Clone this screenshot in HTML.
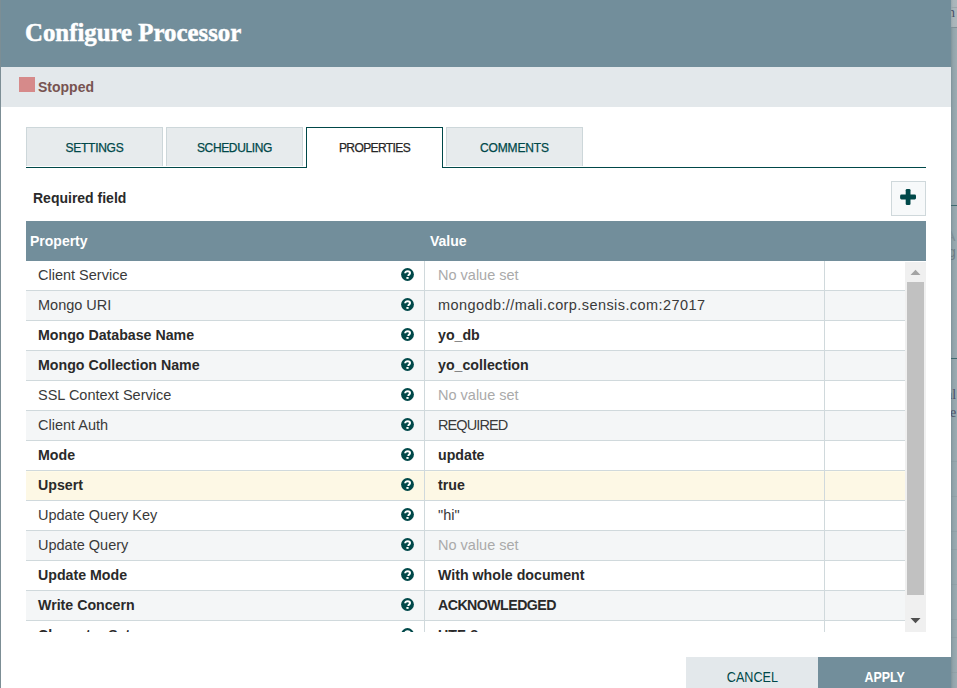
<!DOCTYPE html>
<html><head><meta charset="utf-8">
<style>
*{margin:0;padding:0;box-sizing:border-box}
html,body{width:957px;height:688px;overflow:hidden;background:#9aa9af;font-family:"Liberation Sans",sans-serif}
.abs{position:absolute}
#leftline{left:0;top:0;width:1px;height:688px;background:#7c8e95}
#dlg{left:1px;top:0;width:950px;height:688px;background:#fff;overflow:hidden}
#hdr{left:0;top:0;width:950px;height:67px;background:#728e9b}
#title{left:24px;top:18px;font-family:"Liberation Serif",serif;font-weight:bold;font-size:26px;letter-spacing:0px;transform:scaleX(0.955);transform-origin:0 0;-webkit-text-stroke:0.5px #fff;color:#fff;line-height:30px;white-space:nowrap}
#status{left:0;top:67px;width:950px;height:40px;background:#e3e8eb}
#sq{left:18px;top:10px;width:16px;height:15px;background:#d68a8a}
#stxt{left:37px;top:11px;font-weight:bold;font-size:14px;color:#775351;line-height:18px}
.tab{top:127px;width:137px;height:39px;background:#e7ebed;border:1px solid #cdd7da;border-bottom:none;color:#004849;font-size:12px;letter-spacing:-0.45px;text-align:center;line-height:40px;text-transform:uppercase;-webkit-text-stroke:0.25px currentColor}
.tab.act{background:#fff;border:1px solid #004849;border-bottom:none;color:#262626;height:41px;z-index:2;line-height:40px}
#tabline{left:25px;top:167px;width:900px;height:1px;background:#004849;z-index:1}
#req{left:32px;top:189px;font-weight:bold;font-size:14px;color:#2a2a2a;line-height:18px}
#add{left:890px;top:181px;width:35px;height:35px;background:#f7f9fa;border:1px solid #cfd8db}
#thead{left:25px;top:221px;width:900px;height:40px;background:#728e9b;color:#fff;font-weight:bold;font-size:14px}
#grid{left:25px;top:261px;width:900px;height:371px;overflow:hidden}
.row{position:absolute;left:0;width:879px;height:30px;border-bottom:1px solid #d0d9dc;font-size:14.5px;color:#3a3a3a}
.row.even{background:#f4f6f7}
.row.hl{background:#fdf8e5;box-shadow:inset 0 1px 0 #fffbe9}
.row b{font-weight:bold;font-size:14.2px;color:#2a2a2a}
.c1{position:absolute;left:12px;top:4.5px;line-height:18px;white-space:nowrap}
.c2{position:absolute;left:412px;top:4.5px;line-height:18px;white-space:nowrap}
.d1{position:absolute;left:398px;top:-1px;width:1px;height:31px;background:#d0d9dc}
.d2{position:absolute;left:798px;top:-1px;width:1px;height:31px;background:#d0d9dc}
.unset{color:#aaaaaa}
.help{position:absolute;left:375.2px;top:7px;width:13px;height:13px}
#sb{left:879px;top:1px;width:21px;height:370px;background:#f0f0f0}
#thumb{left:2px;top:20px;width:17px;height:313px;background:#c1c1c1}
#cancel{left:685px;top:657px;width:132px;height:40px;background:#e3e8eb;color:#004849;font-size:14px;text-align:center;line-height:40px}
#apply{left:817px;top:657px;width:133px;height:40px;background:#728e9b;color:#fff;font-weight:bold;font-size:14px;text-align:center;line-height:40px}
</style></head><body>
<div id="leftline" class="abs"></div>
<div class="abs" style="left:951px;top:0;width:6px;height:688px;background:linear-gradient(90deg,#7f939a 0,#91a3aa 2px,#9cacb2 6px)"></div>
<div class="abs" style="left:951px;top:0;width:6px;height:27px;background:linear-gradient(90deg,#98a6ac 0,#a9b4b9 2px,#acb7bc 6px)"></div>
<div class="abs" style="left:951px;top:444px;width:6px;height:244px;background:repeating-linear-gradient(180deg,rgba(120,135,142,0) 0,rgba(120,135,142,0) 17px,rgba(120,135,142,.22) 17px,rgba(120,135,142,.22) 17.6px)"></div>
<div class="abs" style="left:951px;top:7px;width:6px;height:1px;background:#9aa6ab"></div>
<div class="abs" style="left:951px;top:27px;width:6px;height:1px;background:#7f8f96"></div>
<div class="abs" style="left:951px;top:205px;width:6px;height:1px;background:#3f6a6f"></div>
<div class="abs" style="left:951px;top:358px;width:6px;height:1px;background:#3f6a6f"></div>
<div class="abs" style="left:948px;top:4px;font-family:'Liberation Serif',serif;font-size:14px;line-height:18px;color:#4b5068">n</div>
<div class="abs" style="left:946px;top:227px;font-size:14px;line-height:18px;color:#7d8c93">A</div>
<div class="abs" style="left:948px;top:243px;font-size:14px;line-height:18px;color:#6d7c83">g</div>
<div class="abs" style="left:946px;top:386px;font-family:'Liberation Serif',serif;font-size:14px;line-height:18px;color:#4b5068">al</div>
<div class="abs" style="left:946px;top:404px;font-family:'Liberation Serif',serif;font-size:14px;line-height:18px;color:#4b5068">le</div>
<div id="dlg" class="abs">
  <div id="hdr" class="abs"><div id="title" class="abs">Configure Processor</div></div>
  <div id="status" class="abs"><div id="sq" class="abs"></div><div id="stxt" class="abs">Stopped</div></div>
  <div class="tab abs" style="left:25px;letter-spacing:-0.28px">Settings</div>
  <div class="tab abs" style="left:165px;letter-spacing:-0.35px">Scheduling</div>
  <div class="tab abs act" style="left:305px;letter-spacing:-0.6px">Properties</div>
  <div class="tab abs" style="left:445px;letter-spacing:-0.14px">Comments</div>
  <div id="tabline" class="abs"></div>
  <div id="req" class="abs">Required field</div>
  <div id="add" class="abs"><svg width="35" height="35" viewBox="0 0 35 35" style="position:absolute;left:-1px;top:-1px"><rect x="9.1" y="13.6" width="15.9" height="4.8" rx="1.3" fill="#004849"/><rect x="14.7" y="8" width="4.8" height="16" rx="1.3" fill="#004849"/></svg></div>
  <div id="thead" class="abs"><span class="abs" style="left:4px;top:11px;line-height:18px">Property</span><span class="abs" style="left:404px;top:11px;line-height:18px">Value</span></div>
  <div id="grid" class="abs">
    <div class="row " style="top:0px"><div class="c1">Client Service</div><svg class="help" viewBox="0 0 13 13"><circle cx="6.5" cy="6.5" r="6.4" fill="#004849"/><path d="M4.2 5.3C4.2 3.9 5.2 3.3 6.6 3.3C8 3.3 9 4 9 5.1C9 6.5 7.3 6.5 7.3 7.9" stroke="#fff" stroke-width="2" fill="none"/><rect x="5.4" y="9" width="2.2" height="1.9" fill="#fff"/></svg><div class="d1"></div><div class="c2 unset">No value set</div><div class="d2"></div></div>
    <div class="row even" style="top:30px"><div class="c1">Mongo URI</div><svg class="help" viewBox="0 0 13 13"><circle cx="6.5" cy="6.5" r="6.4" fill="#004849"/><path d="M4.2 5.3C4.2 3.9 5.2 3.3 6.6 3.3C8 3.3 9 4 9 5.1C9 6.5 7.3 6.5 7.3 7.9" stroke="#fff" stroke-width="2" fill="none"/><rect x="5.4" y="9" width="2.2" height="1.9" fill="#fff"/></svg><div class="d1"></div><div class="c2 "><span style="letter-spacing:0.42px">mongodb://mali.corp.sensis.com:27017</span></div><div class="d2"></div></div>
    <div class="row " style="top:60px"><div class="c1"><b>Mongo Database Name</b></div><svg class="help" viewBox="0 0 13 13"><circle cx="6.5" cy="6.5" r="6.4" fill="#004849"/><path d="M4.2 5.3C4.2 3.9 5.2 3.3 6.6 3.3C8 3.3 9 4 9 5.1C9 6.5 7.3 6.5 7.3 7.9" stroke="#fff" stroke-width="2" fill="none"/><rect x="5.4" y="9" width="2.2" height="1.9" fill="#fff"/></svg><div class="d1"></div><div class="c2 "><b>yo_db</b></div><div class="d2"></div></div>
    <div class="row even" style="top:90px"><div class="c1"><b>Mongo Collection Name</b></div><svg class="help" viewBox="0 0 13 13"><circle cx="6.5" cy="6.5" r="6.4" fill="#004849"/><path d="M4.2 5.3C4.2 3.9 5.2 3.3 6.6 3.3C8 3.3 9 4 9 5.1C9 6.5 7.3 6.5 7.3 7.9" stroke="#fff" stroke-width="2" fill="none"/><rect x="5.4" y="9" width="2.2" height="1.9" fill="#fff"/></svg><div class="d1"></div><div class="c2 "><b>yo_collection</b></div><div class="d2"></div></div>
    <div class="row " style="top:120px"><div class="c1">SSL Context Service</div><svg class="help" viewBox="0 0 13 13"><circle cx="6.5" cy="6.5" r="6.4" fill="#004849"/><path d="M4.2 5.3C4.2 3.9 5.2 3.3 6.6 3.3C8 3.3 9 4 9 5.1C9 6.5 7.3 6.5 7.3 7.9" stroke="#fff" stroke-width="2" fill="none"/><rect x="5.4" y="9" width="2.2" height="1.9" fill="#fff"/></svg><div class="d1"></div><div class="c2 unset">No value set</div><div class="d2"></div></div>
    <div class="row even" style="top:150px"><div class="c1">Client Auth</div><svg class="help" viewBox="0 0 13 13"><circle cx="6.5" cy="6.5" r="6.4" fill="#004849"/><path d="M4.2 5.3C4.2 3.9 5.2 3.3 6.6 3.3C8 3.3 9 4 9 5.1C9 6.5 7.3 6.5 7.3 7.9" stroke="#fff" stroke-width="2" fill="none"/><rect x="5.4" y="9" width="2.2" height="1.9" fill="#fff"/></svg><div class="d1"></div><div class="c2 "><span style="letter-spacing:-0.9px">REQUIRED</span></div><div class="d2"></div></div>
    <div class="row " style="top:180px"><div class="c1"><b>Mode</b></div><svg class="help" viewBox="0 0 13 13"><circle cx="6.5" cy="6.5" r="6.4" fill="#004849"/><path d="M4.2 5.3C4.2 3.9 5.2 3.3 6.6 3.3C8 3.3 9 4 9 5.1C9 6.5 7.3 6.5 7.3 7.9" stroke="#fff" stroke-width="2" fill="none"/><rect x="5.4" y="9" width="2.2" height="1.9" fill="#fff"/></svg><div class="d1"></div><div class="c2 "><b>update</b></div><div class="d2"></div></div>
    <div class="row hl" style="top:210px"><div class="c1"><b>Upsert</b></div><svg class="help" viewBox="0 0 13 13"><circle cx="6.5" cy="6.5" r="6.4" fill="#004849"/><path d="M4.2 5.3C4.2 3.9 5.2 3.3 6.6 3.3C8 3.3 9 4 9 5.1C9 6.5 7.3 6.5 7.3 7.9" stroke="#fff" stroke-width="2" fill="none"/><rect x="5.4" y="9" width="2.2" height="1.9" fill="#fff"/></svg><div class="d1"></div><div class="c2 "><b>true</b></div><div class="d2"></div></div>
    <div class="row " style="top:240px"><div class="c1">Update Query Key</div><svg class="help" viewBox="0 0 13 13"><circle cx="6.5" cy="6.5" r="6.4" fill="#004849"/><path d="M4.2 5.3C4.2 3.9 5.2 3.3 6.6 3.3C8 3.3 9 4 9 5.1C9 6.5 7.3 6.5 7.3 7.9" stroke="#fff" stroke-width="2" fill="none"/><rect x="5.4" y="9" width="2.2" height="1.9" fill="#fff"/></svg><div class="d1"></div><div class="c2 ">"hi"</div><div class="d2"></div></div>
    <div class="row even" style="top:270px"><div class="c1">Update Query</div><svg class="help" viewBox="0 0 13 13"><circle cx="6.5" cy="6.5" r="6.4" fill="#004849"/><path d="M4.2 5.3C4.2 3.9 5.2 3.3 6.6 3.3C8 3.3 9 4 9 5.1C9 6.5 7.3 6.5 7.3 7.9" stroke="#fff" stroke-width="2" fill="none"/><rect x="5.4" y="9" width="2.2" height="1.9" fill="#fff"/></svg><div class="d1"></div><div class="c2 unset">No value set</div><div class="d2"></div></div>
    <div class="row " style="top:300px"><div class="c1"><b>Update Mode</b></div><svg class="help" viewBox="0 0 13 13"><circle cx="6.5" cy="6.5" r="6.4" fill="#004849"/><path d="M4.2 5.3C4.2 3.9 5.2 3.3 6.6 3.3C8 3.3 9 4 9 5.1C9 6.5 7.3 6.5 7.3 7.9" stroke="#fff" stroke-width="2" fill="none"/><rect x="5.4" y="9" width="2.2" height="1.9" fill="#fff"/></svg><div class="d1"></div><div class="c2 "><b>With whole document</b></div><div class="d2"></div></div>
    <div class="row even" style="top:330px"><div class="c1"><b>Write Concern</b></div><svg class="help" viewBox="0 0 13 13"><circle cx="6.5" cy="6.5" r="6.4" fill="#004849"/><path d="M4.2 5.3C4.2 3.9 5.2 3.3 6.6 3.3C8 3.3 9 4 9 5.1C9 6.5 7.3 6.5 7.3 7.9" stroke="#fff" stroke-width="2" fill="none"/><rect x="5.4" y="9" width="2.2" height="1.9" fill="#fff"/></svg><div class="d1"></div><div class="c2 "><b style="letter-spacing:-0.55px">ACKNOWLEDGED</b></div><div class="d2"></div></div>
    <div class="row " style="top:360px"><div class="c1"><b>Character Set</b></div><svg class="help" viewBox="0 0 13 13"><circle cx="6.5" cy="6.5" r="6.4" fill="#004849"/><path d="M4.2 5.3C4.2 3.9 5.2 3.3 6.6 3.3C8 3.3 9 4 9 5.1C9 6.5 7.3 6.5 7.3 7.9" stroke="#fff" stroke-width="2" fill="none"/><rect x="5.4" y="9" width="2.2" height="1.9" fill="#fff"/></svg><div class="d1"></div><div class="c2 "><b>UTF-8</b></div><div class="d2"></div></div>
    <div id="sb" class="abs"><svg class="abs" style="left:0;top:0" width="21" height="370"><path d="M5.5 13L10.5 7.8 15.5 13Z" fill="#a3a3a3"/><path d="M5.5 356L10.5 361.2 15.5 356Z" fill="#505050"/></svg><div id="thumb" class="abs"></div></div>
  </div>
  <div id="cancel" class="abs"><span style="display:inline-block;transform:scaleX(0.9)">CANCEL</span></div>
  <div id="apply" class="abs"><span style="display:inline-block;transform:scaleX(0.89)">APPLY</span></div>
</div>
</body></html>
